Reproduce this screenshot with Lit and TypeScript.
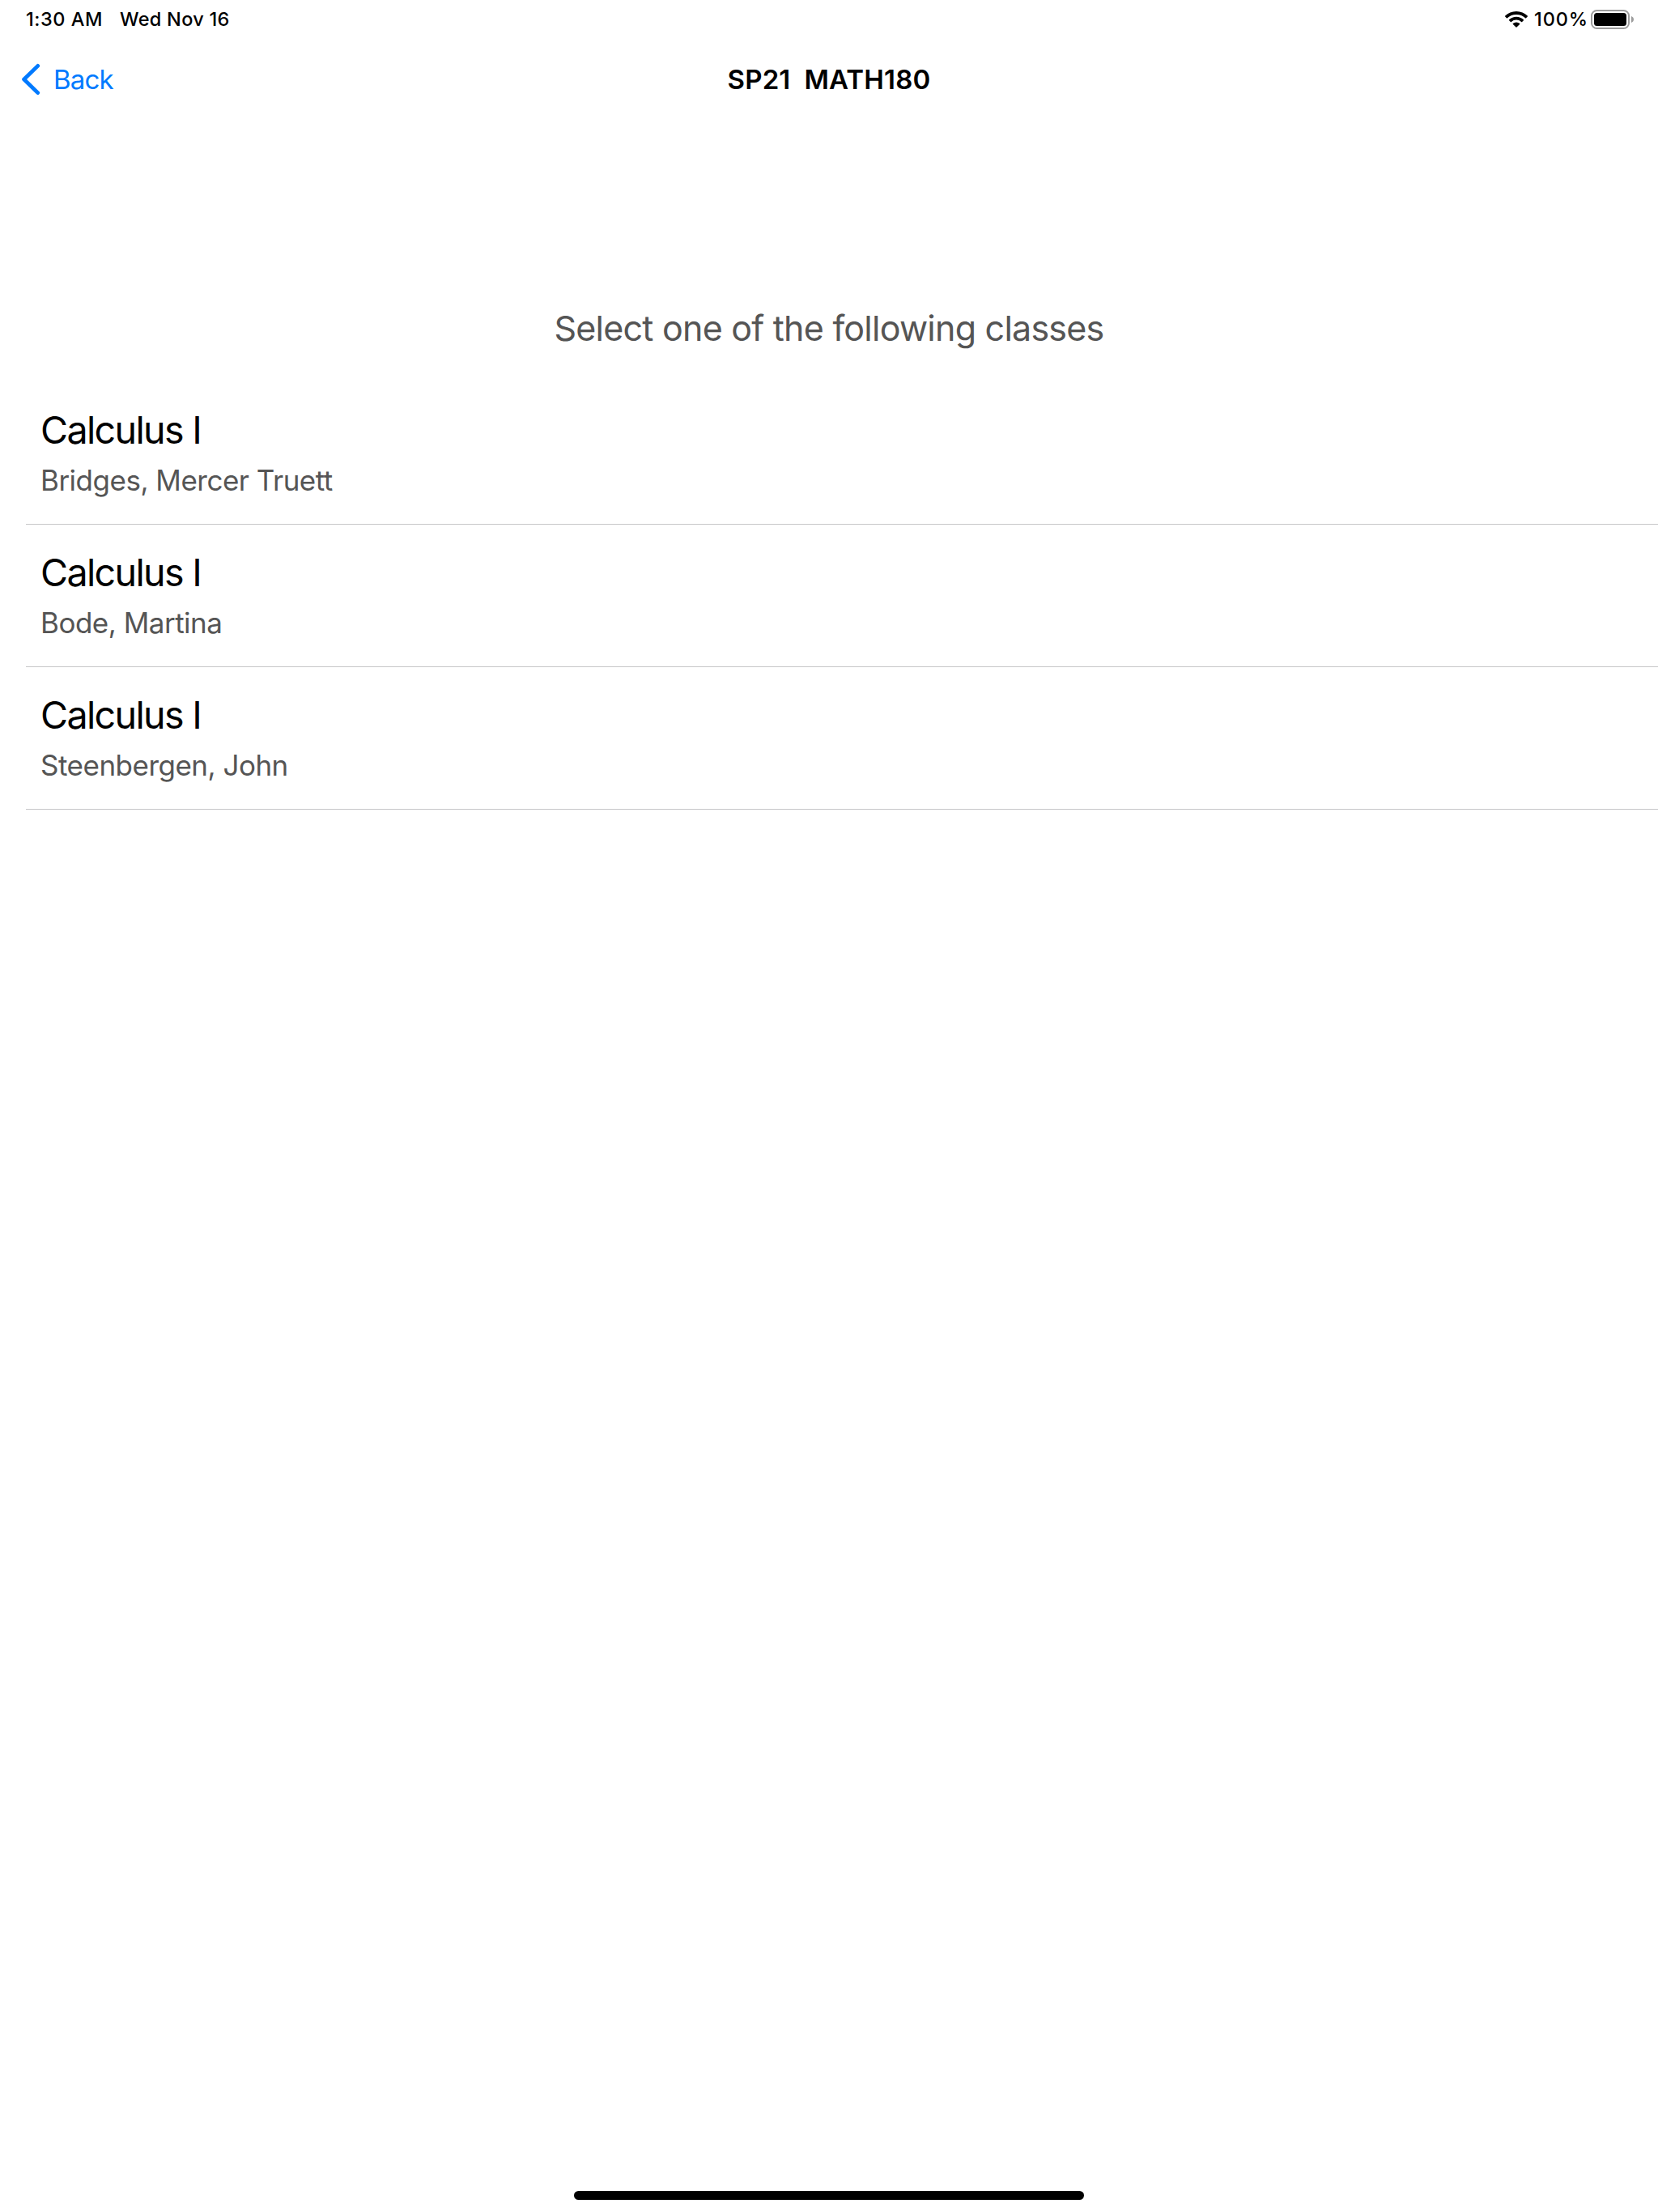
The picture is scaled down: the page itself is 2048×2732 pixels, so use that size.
import { LitElement, html, css } from "lit";
import { customElement, property, state } from "lit/decorators.js";

interface ClassEntry {
  title: string;
  instructor: string;
}

@customElement("status-bar")
class StatusBar extends LitElement {
  static styles = css`
    :host {
      display: flex;
      align-items: center;
      height: 48px;
      padding: 0 30px 0 32px;
      font-size: 23.5px;
      font-weight: 500;
      line-height: 48px;
      white-space: nowrap;
    }
    .time {
      width: 116px;
      letter-spacing: 0.55px;
    }
    .date {
      letter-spacing: 0.28px;
    }
    .status {
      display: flex;
      align-items: center;
      height: 48px;
      margin-left: auto;
    }
    .percent {
      width: 70px;
      margin-left: 8px;
      letter-spacing: 0.9px;
    }
    svg {
      display: block;
    }
  `;

  render() {
    return html`
      <span class="time">1:30 AM</span>
      <span class="date">Wed Nov 16</span>
      <div class="status">
        <svg width="28" height="20" viewBox="0 0 28 20">
          <path d="M14 0C8.600 0 3.700 2.100 0.250 5.600a0.700 0.700 0 0 0 0 1l1.650 1.700a0.700 0.700 0 0 0 1 0A15.700 15.700 0 0 1 14 3.900a15.700 15.700 0 0 1 11.100 4.400a0.700 0.700 0 0 0 1 0l1.650-1.700a0.700 0.700 0 0 0 0-1C24.300 2.100 19.400 0 14 0z" />
          <path d="M14 6.800a13 13 0 0 0-8.900 3.500a0.700 0.700 0 0 0 0 1l1.750 1.700a0.700 0.700 0 0 0 1 0A9 9 0 0 1 14 10.600a9 9 0 0 1 6.150 2.400a0.700 0.700 0 0 0 1 0l1.750-1.700a0.700 0.700 0 0 0 0-1A13 13 0 0 0 14 6.800z" />
          <path d="M14 13.400a6.400 6.400 0 0 0-4.100 1.500a0.700 0.700 0 0 0 0 1.100l3.600 3.600a0.700 0.700 0 0 0 1 0l3.600-3.600a0.700 0.700 0 0 0 0-1.100A6.400 6.400 0 0 0 14 13.400z" />
        </svg>
        <span class="percent">100%</span>
        <svg width="53" height="24" viewBox="0 0 53 24">
          <rect x="1" y="1" width="46" height="22" rx="6.500" fill="none" stroke="#9c9c9c" stroke-width="2" />
          <rect x="4" y="4" width="40" height="16" rx="3.500" />
          <path d="M50 8c1.900 0.700 3 2.200 3 4s-1.100 3.300-3 4z" fill="#9c9c9c" />
        </svg>
      </div>
    `;
  }
}

@customElement("nav-bar")
class NavBar extends LitElement {
  static styles = css`
    :host {
      display: grid;
      grid-template-columns: 1fr auto 1fr;
      align-items: center;
      height: 100px;
      padding: 0 26px;
      font-size: 33px;
      line-height: 100px;
      white-space: pre;
    }
    .back {
      display: flex;
      align-items: center;
      gap: 16px;
      color: #007aff;
      letter-spacing: -0.8px;
    }
    .heading {
      font-weight: 600;
      letter-spacing: 0.17px;
    }
    svg {
      display: block;
    }
  `;

  @property() heading = "";

  render() {
    return html`<div class="back"><svg width="24" height="40" viewBox="0 0 24 40"><path d="M20.700 3.400L3.600 20L20.700 36.600" fill="none" stroke="currentColor" stroke-width="4.800" stroke-linecap="round" stroke-linejoin="round" /></svg><span>Back</span></div><div class="heading">${this.heading}</div>`;
  }
}

@customElement("class-row")
class ClassRow extends LitElement {
  static styles = css`
    :host {
      display: flex;
      flex-direction: column;
      gap: 11px;
      box-sizing: border-box;
      height: 176px;
      margin-left: 32px;
      padding: 30px 18px 0;
      border-bottom: 1px solid #c6c6c8;
      white-space: nowrap;
    }
    .title {
      font-size: 46.6px;
      line-height: 58px;
      letter-spacing: -1.65px;
    }
    .instructor {
      color: #555;
      font-size: 35px;
      line-height: 44px;
      letter-spacing: -0.5px;
    }
  `;

  @property() heading = "";
  @property() instructor = "";

  render() {
    return html`
      <div class="title">${this.heading}</div>
      <div class="instructor">${this.instructor}</div>
    `;
  }
}

@customElement("app-root")
class AppRoot extends LitElement {
  static styles = css`
    :host {
      display: flex;
      flex-direction: column;
      box-sizing: border-box;
      height: 2732px;
      padding-bottom: 15px;
      background: #fff;
      color: #000;
      font-family: Inter, "Liberation Sans", sans-serif;
    }
    .prompt {
      padding: 227px 0 37px;
      color: #555;
      font-size: 43px;
      line-height: 60px;
      letter-spacing: -0.76px;
      text-align: center;
    }
    .home-indicator {
      width: 630px;
      height: 11px;
      margin: auto auto 0;
      border-radius: 6px;
      background: #000;
    }
  `;

  @state() private classes: ClassEntry[] = [
    { title: "Calculus I", instructor: "Bridges, Mercer Truett" },
    { title: "Calculus I", instructor: "Bode, Martina" },
    { title: "Calculus I", instructor: "Steenbergen, John" },
  ];

  render() {
    return html`
      <status-bar></status-bar>
      <nav-bar heading="SP21  MATH180"></nav-bar>
      <div class="prompt">Select one of the following classes</div>
      ${this.classes.map(
        (c) => html`<class-row heading=${c.title} instructor=${c.instructor}></class-row>`
      )}
      <div class="home-indicator"></div>
    `;
  }
}
